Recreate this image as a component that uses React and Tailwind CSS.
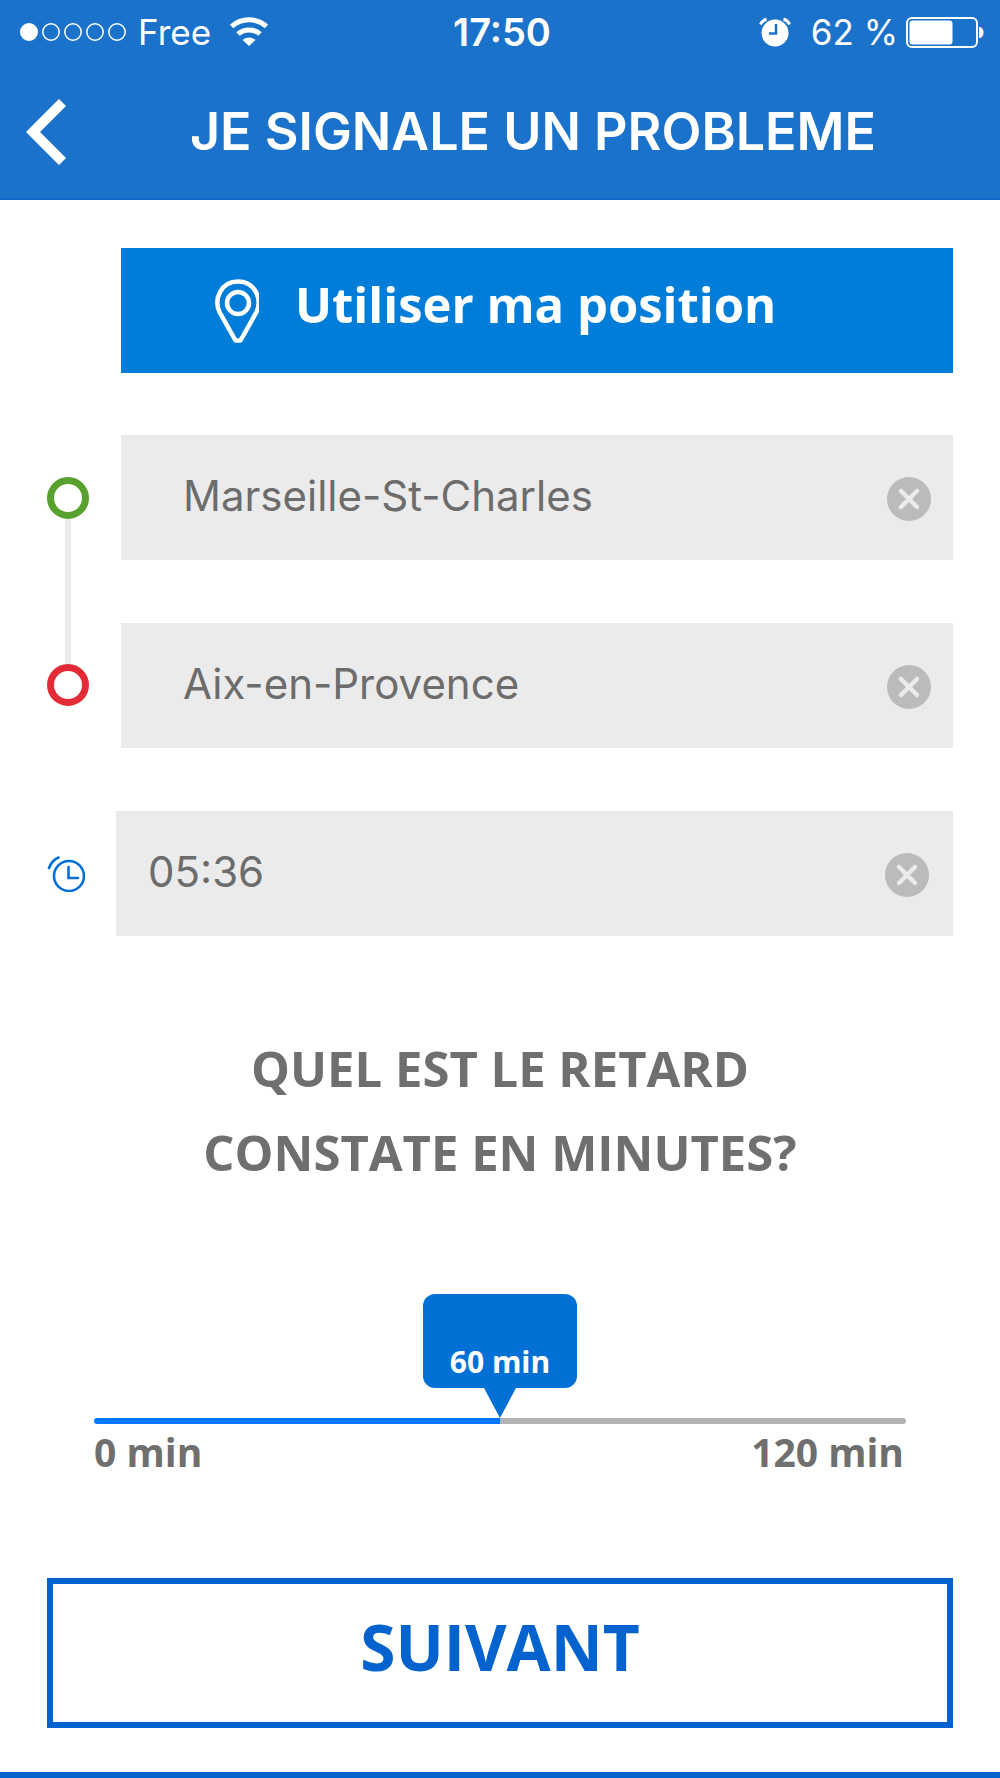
import React, { useState } from 'react';

const MAX_DELAY = 120;

const StatusBar = () => (
    <div className="grid grid-cols-3 items-center h-16 pl-5 pr-4 font-['Inter',sans-serif] text-[35px] leading-none text-white">
        <div className="flex items-center">
            <svg className="w-[108px] h-5 mr-2.5" viewBox="0 0 108 20" fill="none" stroke="white" strokeWidth="1.5">
                <circle cx="9" cy="10" r="9" fill="white" stroke="none" />
                <circle cx="31" cy="10" r="8.2" />
                <circle cx="53" cy="10" r="8.2" />
                <circle cx="75" cy="10" r="8.2" />
                <circle cx="97" cy="10" r="8.2" />
            </svg>
            <span>Free</span>
            <svg className="w-[38px] h-[30px] ml-[19px]" viewBox="0 0 38 30" fill="none" stroke="white" strokeWidth="5">
                <path d="M1.500 9.500C11.500 0.500 26.500 0.500 36.500 9.500" />
                <path d="M8 17C14 11.500 24 11.500 30 17" />
                <path d="M12.500 23C16 19.500 22 19.500 25.500 23L19 29Z" fill="white" stroke="none" />
            </svg>
        </div>
        <span className="text-center text-[38px] font-semibold">17:50</span>
        <div className="flex items-center justify-end">
            <svg className="w-8 h-[30px] mr-5" viewBox="0 0 32 30" fill="none">
                <circle cx="16" cy="16" r="13.5" fill="white" />
                <path d="M1.500 7.500C2.500 5 4.500 3 7.500 2M30.500 7.500C29.500 5 27.500 3 24.500 2" stroke="white" strokeWidth="3" />
                <path d="M17 7V16.500H10" stroke="#1b72cb" strokeWidth="2.5" />
            </svg>
            <span>62 %</span>
            <svg className="w-[78px] h-8 ml-2" viewBox="0 0 78 32" fill="none">
                <rect x="1" y="2" width="70" height="29" rx="5" stroke="white" strokeWidth="2" />
                <rect x="3.5" y="4.5" width="43" height="24" rx="3" fill="white" />
                <path d="M73 11C79 11 79 22 73 22Z" fill="white" />
            </svg>
        </div>
    </div>
);

const ClearButton = ({ label, onClick }) => (
    <button type="button" aria-label={label} onClick={onClick} className="shrink-0">
        <svg className="w-11 h-11" viewBox="0 0 44 44">
            <circle cx="22" cy="22" r="22" fill="#bbbbbb" />
            <path d="M14 14L30 30M30 14L14 30" stroke="#ebebeb" strokeWidth="4.5" strokeLinecap="round" />
        </svg>
    </button>
);

const Field = ({ label, value, onChange, className }) => (
    <div className={`flex items-center h-[125px] pt-0.5 bg-[#ebebeb] ${className}`}>
        <input
            type="text"
            aria-label={label}
            value={value}
            onChange={(e) => onChange(e.target.value)}
            className="flex-1 min-w-0 pb-1.5 bg-transparent outline-none font-['Inter',sans-serif] text-[42px] text-[#6b6c6b]"
        />
        <ClearButton label={`Effacer ${label}`} onClick={() => onChange('')} />
    </div>
);

const DelaySlider = ({ value, onChange }) => {
    const percent = (value / MAX_DELAY) * 100;

    return (
        <div className="mx-[47px]">
            {/* Value bubble, follows the slider position */}
            <div
                className="flex flex-col items-center w-[154px] -translate-x-1/2"
                style={{ marginLeft: `${percent}%` }}
            >
                <output htmlFor="delay" className="flex items-end justify-center w-full h-[94px] pb-2 rounded-xl bg-[#0270d4] text-[30px] leading-9 font-bold text-white">
                    {value} min
                </output>
                <svg className="w-8 h-[30px]" viewBox="0 0 32 30">
                    <path d="M0 0H32L16 30Z" fill="#0270d4" />
                </svg>
            </div>
            <input
                id="delay"
                type="range"
                aria-label="Retard en minutes"
                min="0"
                max={MAX_DELAY}
                value={value}
                onChange={(e) => onChange(Number(e.target.value))}
                className="block w-full h-[6px] rounded-full appearance-none cursor-pointer [&::-webkit-slider-thumb]:appearance-none [&::-webkit-slider-thumb]:w-8 [&::-webkit-slider-thumb]:h-8 [&::-webkit-slider-thumb]:opacity-0"
                style={{ background: `linear-gradient(to right, #0078ff ${percent}%, #b3b3b3 ${percent}%)` }}
            />
            <div className="flex justify-between pr-0.5 pb-1 text-[39px] leading-[56px] font-bold text-[#6e6f6e]">
                <span>0 min</span>
                <span>{MAX_DELAY} min</span>
            </div>
        </div>
    );
};

const App = () => {
    const [from, setFrom] = useState('Marseille-St-Charles');
    const [to, setTo] = useState('Aix-en-Provence');
    const [time, setTime] = useState('05:36');
    const [delay, setDelay] = useState(60);

    return (
        <div className="flex flex-col min-h-screen bg-white font-['Open_Sans',sans-serif]">
            <header className="bg-[#1b72cb] border-b-2 border-[#0b68c8]">
                <StatusBar />
                <div className="flex items-center h-[134px] pt-0.5">
                    <button type="button" aria-label="Retour" className="ml-[26px]">
                        <svg className="w-10 h-[66px]" viewBox="0 0 40 66" fill="none">
                            <path d="M36.500 3.500L7 33L36.500 62.500" stroke="white" strokeWidth="10" />
                        </svg>
                    </button>
                    <h1 className="flex-1 text-center font-['Inter',sans-serif] text-[52px] leading-none font-semibold text-white">
                        JE SIGNALE UN PROBLEME
                    </h1>
                </div>
            </header>

            <main className="flex flex-col px-[47px] pt-12">
                <button type="button" className="flex items-center h-[125px] ml-[74px] pl-[94px] bg-[#007dd8] text-white">
                    <svg className="w-11 h-16 mr-9" viewBox="0 0 44 64" fill="none" stroke="white">
                        <path d="M20.500 61.500L4.500 33C-1.500 20 6 2.500 23 2.500C40 2.500 47.500 20 41.500 33L25.500 61.500Z" strokeWidth="4.500" strokeLinejoin="round" />
                        <circle cx="23" cy="24" r="11" strokeWidth="4.500" />
                    </svg>
                    <span className="pb-3 text-[49px] leading-none font-bold">Utiliser ma position</span>
                </button>

                {/* Departure and arrival */}
                <div className="flex mt-[62px]">
                    <div className="flex flex-col items-center w-[42px] mr-8 py-[42px]">
                        <span className="w-[42px] h-[42px] rounded-full border-[7px] border-[#58a12e]" />
                        <span className="flex-1 w-[6px] bg-[#ebebeb]" />
                        <span className="w-[42px] h-[42px] rounded-full border-[7px] border-[#e22b37]" />
                    </div>
                    <div className="flex flex-col flex-1 gap-[63px]">
                        <Field label="Gare de départ" value={from} onChange={setFrom} className="pl-[62px] pr-[22px]" />
                        <Field label="Gare d'arrivée" value={to} onChange={setTo} className="pl-[62px] pr-[22px]" />
                    </div>
                </div>

                <div className="flex items-center mt-[63px]">
                    <svg className="w-[38px] h-9 mr-[31px]" viewBox="0 0 38 36" fill="none" stroke="#0270d8" strokeWidth="2.6" strokeLinecap="round">
                        <circle cx="22" cy="20" r="15" />
                        <path d="M21.500 11V22H31" />
                        <path d="M2 12C4 7 7 3.500 11.500 1.500" />
                    </svg>
                    <Field label="Heure" value={time} onChange={setTime} className="flex-1 pl-8 pr-6" />
                </div>

                <h2 className="mt-[90px] text-center text-[49px] leading-[84px] font-bold text-[#6e6f6e]">
                    QUEL EST LE RETARD
                    <br />
                    CONSTATE EN MINUTES?
                </h2>

                <div className="mt-[100px]">
                    <DelaySlider value={delay} onChange={setDelay} />
                </div>

                <button type="button" className="h-[150px] mt-[94px] pb-3 border-[6px] border-[#0263ce] text-[64px] leading-none font-bold text-[#0263ce]">
                    SUIVANT
                </button>
            </main>

            <footer className="h-[6px] mt-auto bg-[#0263ce]" />
        </div>
    );
};

export default App;
